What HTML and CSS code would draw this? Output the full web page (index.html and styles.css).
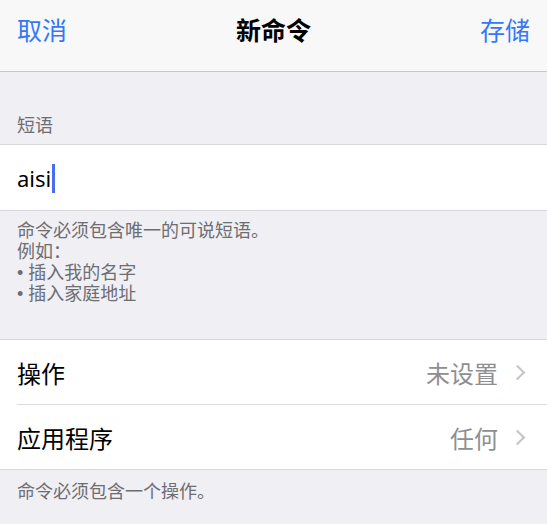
FILE: index.html
```html
<!DOCTYPE html>
<html lang="zh-CN">
<head>
    <meta charset="UTF-8">
    <meta name="viewport" content="width=device-width, initial-scale=1.0">
    <title>新命令</title>
    <link rel="stylesheet" href="styles.css">
</head>
<body>
    <div class="navbar">
        <span class="nav-btn">取消</span>
        <span class="nav-title">新命令</span>
        <span class="nav-btn">存储</span>
    </div>

    <div class="section-header">短语</div>
    <div class="group">
        <div class="phrase-row">
            <span class="phrase-text">aisi</span><span class="caret"></span>
        </div>
    </div>
    <div class="section-footer tall">
        <div class="line">命令必须包含唯一的可说短语。</div>
        <div class="line">例如：</div>
        <div class="line"><span class="bullet">• </span>插入我的名字</div>
        <div class="line"><span class="bullet">• </span>插入家庭地址</div>
    </div>

    <div class="group">
        <div class="cell">
            <span class="cell-label">操作</span>
            <span class="cell-value">未设置</span>
            <span class="chevron"></span>
        </div>
        <div class="cell">
            <span class="cell-label">应用程序</span>
            <span class="cell-value">任何</span>
            <span class="chevron"></span>
        </div>
    </div>
    <div class="section-footer">
        <div class="line">命令必须包含一个操作。</div>
    </div>
</body>
</html>
```

FILE: styles.css
```css
body {
    margin: 0;
    background-color: #efeff4;
    font-family: "Noto Sans CJK SC", "Noto Sans", sans-serif;
    color: #000;
}
.navbar {
    height: 72px;
    background-color: #f8f8f9;
    border-bottom: 1px solid #c8c7cc;
    display: flex;
    justify-content: space-between;
    align-items: flex-start;
    padding: 11px 17px 0 17px;
    box-sizing: border-box;
}
.nav-btn {
    color: #3478f6;
    font-size: 25px;
    line-height: 36px;
}
.nav-title {
    font-size: 25px;
    line-height: 36px;
    font-weight: bold;
}
.section-header {
    height: 72px;
    box-sizing: border-box;
    padding: 0 17px 9px;
    display: flex;
    align-items: flex-end;
    font-size: 18px;
    line-height: 21px;
    color: #6d6d72;
}
.group {
    background-color: #fff;
    border-top: 1px solid #d8d8dc;
    border-bottom: 1px solid #d8d8dc;
}
.phrase-row {
    height: 65px;
    display: flex;
    align-items: center;
    padding-left: 17px;
}
.phrase-text {
    font-family: "Noto Sans", sans-serif;
    font-size: 22px;
}
.caret {
    width: 3px;
    height: 29px;
    background-color: #4a6cf0;
    margin-left: 1px;
    margin-top: 2px;
}
.section-footer {
    padding: 10px 17px 0;
    font-size: 18px;
    color: #6d6d72;
    height: 45px;
}
.section-footer.tall {
    padding-top: 8px;
    height: 120px;
}
.line {
    height: 21px;
    line-height: 21px;
    white-space: nowrap;
}
.bullet {
    font-family: "Liberation Sans", sans-serif;
}
.cell {
    height: 64px;
    display: flex;
    align-items: center;
    padding: 0 22px 0 17px;
}
.cell + .cell {
    border-top: 1px solid #dcdce0;
    margin-left: 17px;
    padding-left: 0;
}
.cell-label {
    flex: 1;
    font-size: 24px;
}
.cell-value {
    font-size: 24px;
    color: #8e8e93;
    margin-right: 14px;
}
.chevron {
    width: 9px;
    height: 9px;
    border-top: 2px solid #c4c4c8;
    border-right: 2px solid #c4c4c8;
    transform: rotate(45deg);
    margin-right: 2px;
}
```
